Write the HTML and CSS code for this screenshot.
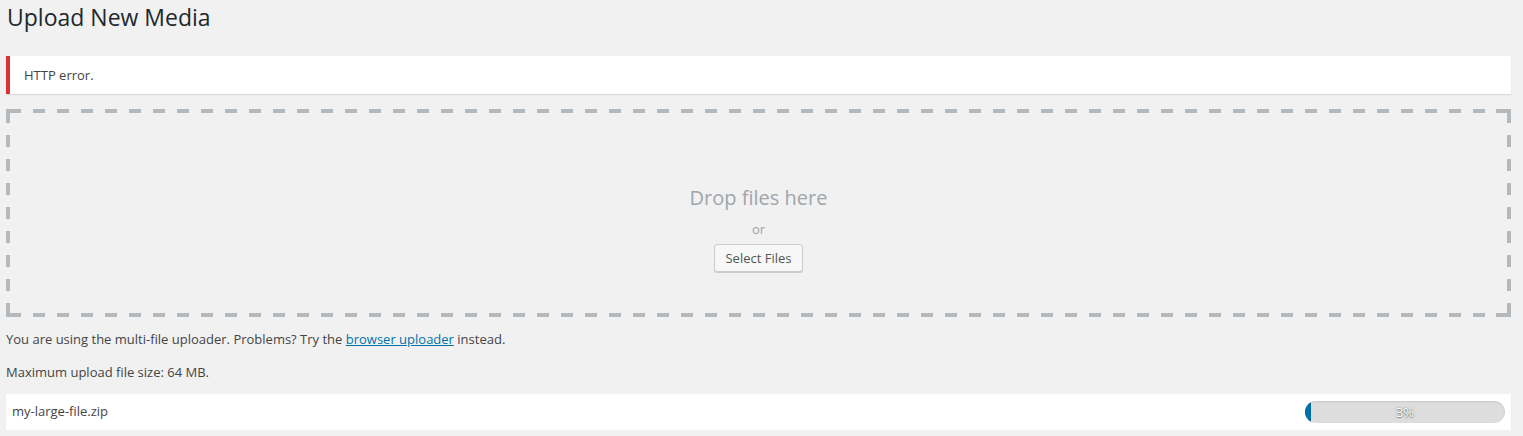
FILE: index.html
```html
<!DOCTYPE html>
<html lang="en">
<head>
    <meta charset="UTF-8">
    <title>Upload New Media</title>
    <link rel="stylesheet" href="styles.css">
</head>
<body>
    <div class="wrap">
        <h1>Upload New Media</h1>

        <div class="notice notice-error">
            <p>HTTP error.</p>
        </div>

        <div class="drag-drop">
            <p class="drag-drop-info">Drop files here</p>
            <p class="drag-drop-or">or</p>
            <button type="button" class="button">Select Files</button>
        </div>

        <p class="upload-flash-bypass">You are using the multi-file uploader. Problems? Try the <a href="#">browser uploader</a> instead.</p>
        <p class="max-upload-size">Maximum upload file size: 64 MB.</p>

        <div class="media-item">
            <div class="filename">my-large-file.zip</div>
            <div class="progress">
                <div class="bar" style="width: 3%"></div>
                <div class="percent">3%</div>
            </div>
        </div>
    </div>
</body>
</html>
```

FILE: styles.css
```css
* {
    margin: 0;
    padding: 0;
    box-sizing: border-box;
}

body {
    background: #f1f1f1;
    color: #444;
    font-family: "Open Sans", sans-serif;
    font-size: 13px;
    line-height: 1.5;
}

.wrap {
    padding: 3px 12px 0 6px;
}

h1 {
    font-size: 23px;
    font-weight: 400;
    line-height: 29px;
    color: #23282d;
    padding-left: 1px;
    margin-bottom: 24px;
}

.notice {
    background: #fff;
    border-left: 4px solid #fff;
    box-shadow: 0 1px 1px 0 rgba(0, 0, 0, 0.1);
    padding: 1px 12px;
}

.notice-error {
    border-left-color: #dc3232;
}

.notice p {
    margin: 6.5px 0;
    padding: 2px;
    line-height: 19px;
}

/* dashed frame: 12px dashes every 24px, solid L at each corner */
.drag-drop {
    margin-top: 15px;
    height: 208px;
    padding: 75px 4px 4px;
    display: flex;
    flex-direction: column;
    align-items: center;
    background-image:
        linear-gradient(#b4b9be, #b4b9be),
        linear-gradient(#b4b9be, #b4b9be),
        linear-gradient(#b4b9be, #b4b9be),
        linear-gradient(#b4b9be, #b4b9be),
        linear-gradient(#b4b9be, #b4b9be),
        linear-gradient(#b4b9be, #b4b9be),
        linear-gradient(#b4b9be, #b4b9be),
        linear-gradient(#b4b9be, #b4b9be),
        repeating-linear-gradient(to right, transparent 0 3px, #b4b9be 3px 15px, transparent 15px 24px),
        repeating-linear-gradient(to right, transparent 0 3px, #b4b9be 3px 15px, transparent 15px 24px),
        repeating-linear-gradient(to bottom, transparent 0 2px, #b4b9be 2px 14px, transparent 14px 24px),
        repeating-linear-gradient(to bottom, transparent 0 2px, #b4b9be 2px 14px, transparent 14px 24px);
    background-size:
        15px 4px, 4px 14px,
        15px 4px, 4px 14px,
        15px 4px, 4px 14px,
        15px 4px, 4px 14px,
        100% 4px, 100% 4px,
        4px 100%, 4px 100%;
    background-position:
        left top, left top,
        right top, right top,
        left bottom, left bottom,
        right bottom, right bottom,
        left top, left bottom,
        left top, right top;
    background-repeat: no-repeat;
}

.drag-drop-info {
    font-size: 20px;
    line-height: 28px;
    color: #a0a5aa;
}

.drag-drop-or {
    margin-top: 7px;
    line-height: 20px;
    color: #a0a5aa;
}

.button {
    margin-top: 5px;
    height: 28px;
    padding: 0 10px 1px;
    font-family: "Open Sans", sans-serif;
    font-size: 13px;
    line-height: 26px;
    color: #555;
    background: #f7f7f7;
    border: 1px solid #ccc;
    border-radius: 3px;
    box-shadow: 0 1px 0 #ccc;
    cursor: pointer;
}

.upload-flash-bypass,
.max-upload-size {
    margin: 13px 0;
}

.upload-flash-bypass a {
    color: #0073aa;
    text-decoration: underline;
}

.max-upload-size {
    margin-bottom: 12px;
}

.media-item {
    background: #fff;
    height: 36px;
    display: flex;
    align-items: center;
    justify-content: space-between;
    padding: 0 6px;
    box-shadow: 0 1px 1px 0 rgba(0, 0, 0, 0.08);
}

.filename {
    color: #444;
}

.progress {
    width: 200px;
    height: 22px;
    border-radius: 22px;
    background: #ddd;
    box-shadow: inset 0 1px 2px rgba(0, 0, 0, 0.1);
    overflow: hidden;
    display: grid;
}

.bar {
    grid-area: 1 / 1;
    height: 100%;
    border-radius: 22px;
    background: #0073aa;
    box-shadow: inset 0 0 2px rgba(0, 0, 0, 0.3);
}

.percent {
    grid-area: 1 / 1;
    text-align: center;
    line-height: 22px;
    color: #fff;
    text-shadow: 0 0 2px rgba(0, 0, 0, 0.5), 0 1px 1px rgba(0, 0, 0, 0.3);
}
```
